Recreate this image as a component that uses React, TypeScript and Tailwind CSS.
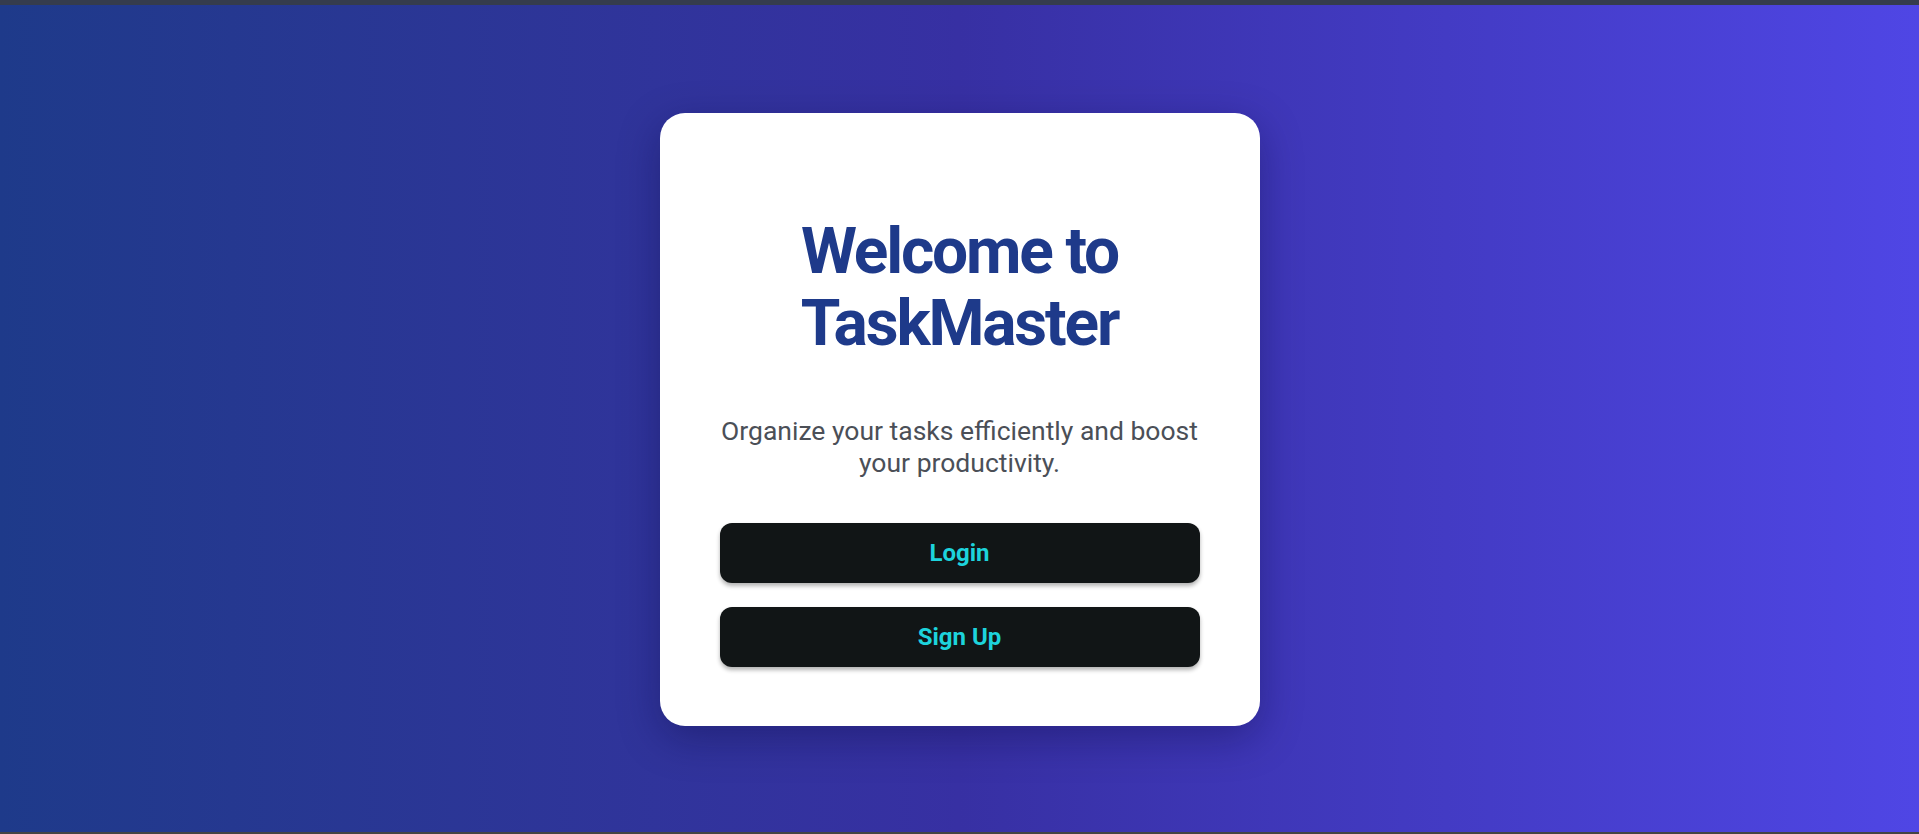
const App = () => {
  return (
    <div className="flex flex-col h-[834px] w-full overflow-hidden" style={{fontFamily: 'Roboto, "Liberation Sans", sans-serif'}}>
      <div className="h-[5px] bg-[#353c4d] flex-none" />
      <div className="flex-1 flex items-center justify-center pt-[2px] bg-gradient-to-r from-[#1e3a8a] via-[#3730a3] to-[#4f46e5]">
        <div className="w-[600px] bg-white rounded-[25px] px-[60px] pt-[60px] pb-[59px] text-center shadow-[0_12px_40px_rgba(10,10,60,0.35)]">
          <h1 className="mt-[43px] text-[64px] leading-[72px] font-bold tracking-[-0.034em] text-[#1e3a8a]">
            Welcome to
            <br />
            TaskMaster
          </h1>
          <p className="mt-[55px] text-[26.5px] leading-[32px] text-[#4b4f57]">
            Organize your tasks efficiently and boost your productivity.
          </p>
          <div className="mt-[44px] flex flex-col gap-[24px]">
            <button className="h-[60px] w-full rounded-xl bg-[#111516] text-[#1dd3dc] text-[24px] font-bold shadow-[0_3px_4px_rgba(0,0,0,0.3)]">
              Login
            </button>
            <button className="h-[60px] w-full rounded-xl bg-[#111516] text-[#1dd3dc] text-[24px] font-bold shadow-[0_3px_4px_rgba(0,0,0,0.3)]">
              Sign Up
            </button>
          </div>
        </div>
      </div>
      <div className="h-[2px] bg-[#444444] flex-none" />
    </div>
  )
}

export default App
